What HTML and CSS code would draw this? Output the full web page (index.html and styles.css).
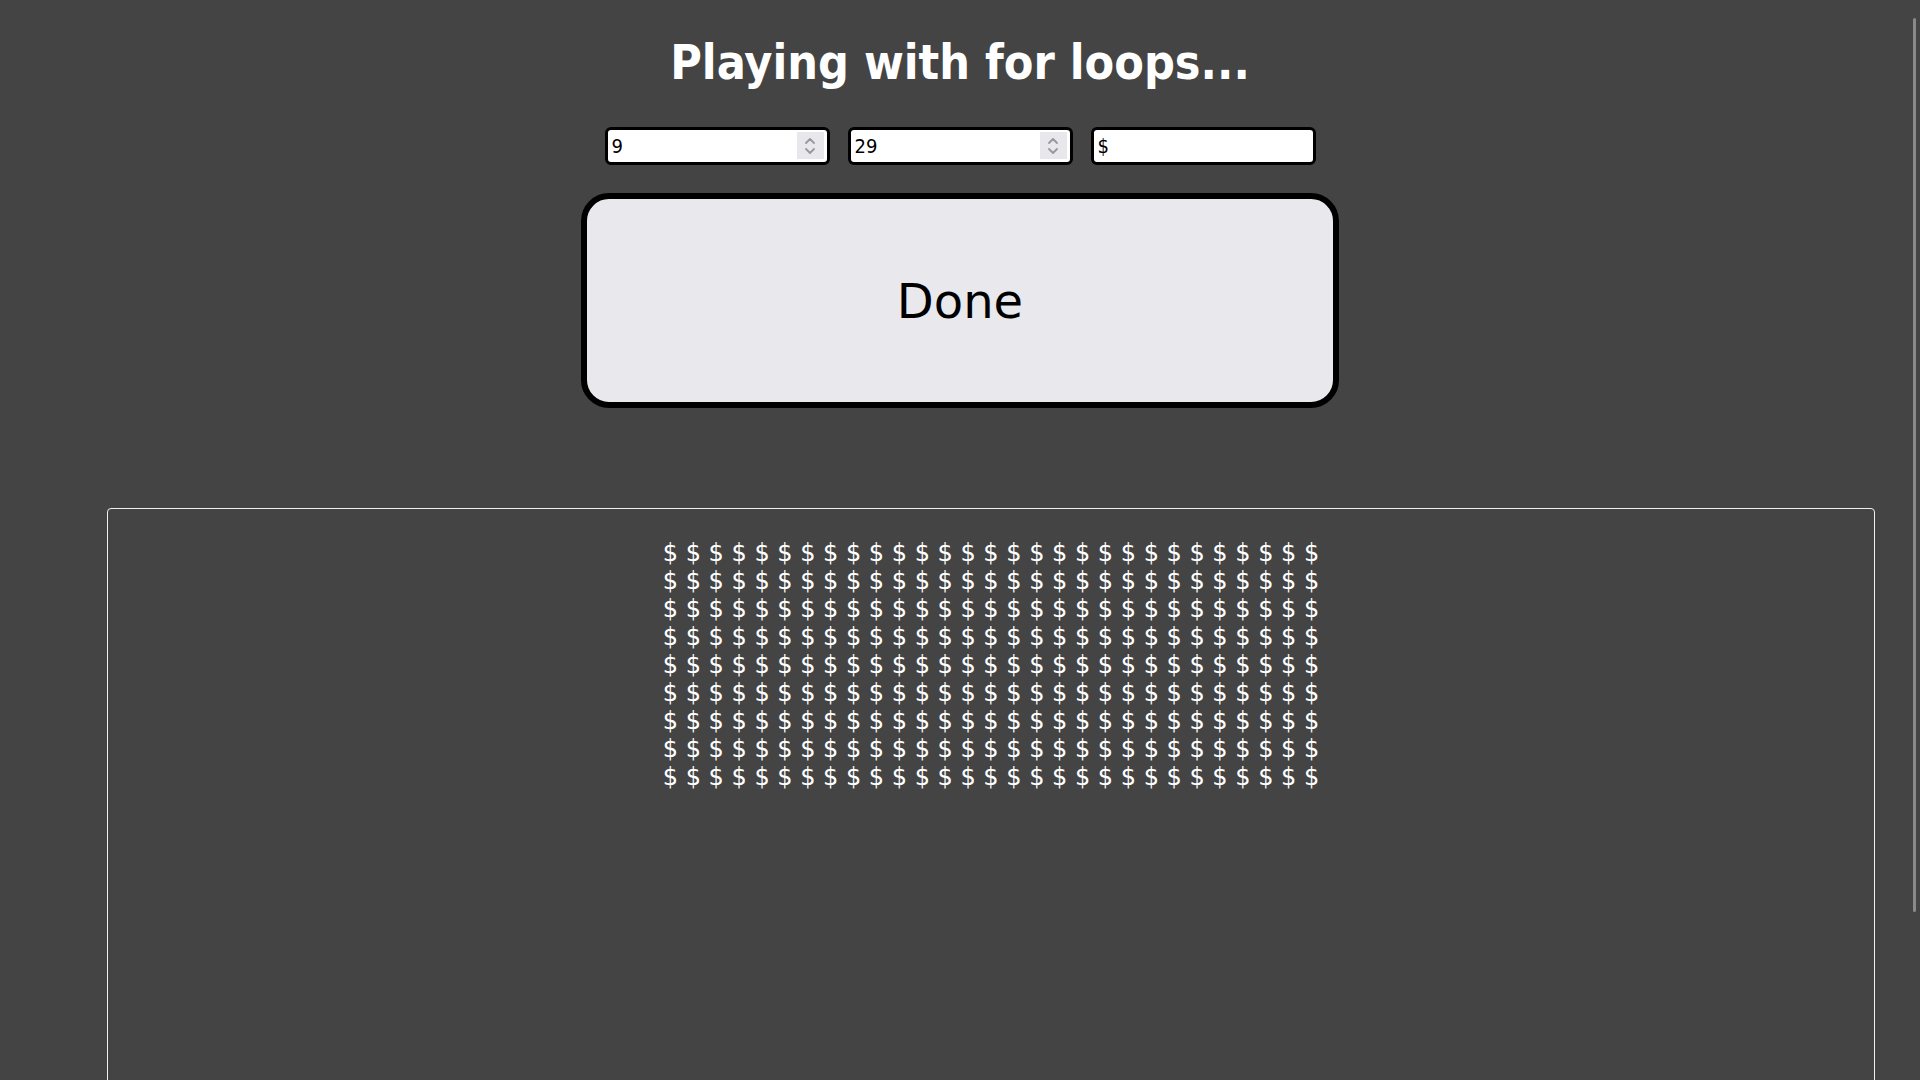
FILE: index.html
```html
<!DOCTYPE html>
<html lang="en">
<head>
<meta charset="utf-8">
<title>Playing with for loops</title>
<link rel="stylesheet" href="styles.css">
</head>
<body>
<header class="top">
  <h1 class="title">Playing with for loops...</h1>
  <div class="controls">
    <div class="field-wrap">
      <input class="field" type="number" value="9">
      <span class="spin" aria-hidden="true">
        <svg width="12" height="20" viewBox="0 0 12 20"><path d="M2 7 L6 3 L10 7" /><path d="M2 13 L6 17 L10 13" /></svg>
      </span>
    </div>
    <div class="field-wrap">
      <input class="field" type="number" value="29">
      <span class="spin" aria-hidden="true">
        <svg width="12" height="20" viewBox="0 0 12 20"><path d="M2 7 L6 3 L10 7" /><path d="M2 13 L6 17 L10 13" /></svg>
      </span>
    </div>
    <div class="field-wrap">
      <input class="field" type="text" value="$">
    </div>
  </div>
  <button class="done" type="button">Done</button>
</header>
<section class="output">
  <div class="grid" id="grid"></div>
</section>
<div class="scroll-thumb" aria-hidden="true"></div>
<script>
  var rows = 9, cols = 29, ch = "$";
  var out = "";
  for (var i = 0; i < rows; i++) {
    var line = [];
    for (var j = 0; j < cols; j++) { line.push(ch); }
    out += line.join(" ") + "<br>";
  }
  document.getElementById("grid").innerHTML = out;
</script>
</body>
</html>
```
FILE: styles.css
```css
html, body {
  margin: 0;
  padding: 0;
}
body {
  background: #444444;
  font-family: "DejaVu Sans", sans-serif;
  color: #ffffff;
}
.top {
  display: flex;
  flex-direction: column;
  align-items: center;
  padding-top: 34px;
}
.title {
  margin: 0;
  font-size: 48px;
  font-weight: bold;
  font-stretch: condensed;
  line-height: 56px;
  color: #ffffff;
}
.controls {
  display: flex;
  gap: 18px;
  margin-top: 37px;
}
.field-wrap {
  position: relative;
  width: 225px;
  height: 38px;
}
.field {
  box-sizing: border-box;
  width: 225px;
  height: 38px;
  border: 3px solid #000;
  border-radius: 6px;
  background: #fff;
  color: #000;
  font-family: "DejaVu Sans", sans-serif;
  font-stretch: condensed;
  font-size: 20px;
  padding: 1px 4px;
  margin: 0;
  outline: none;
  -moz-appearance: textfield;
}
.field::-webkit-inner-spin-button,
.field::-webkit-outer-spin-button {
  -webkit-appearance: none;
  margin: 0;
}
.spin {
  position: absolute;
  top: 5px;
  right: 6px;
  width: 27px;
  height: 27px;
  background: #e8e8ec;
  display: flex;
  align-items: center;
  justify-content: center;
  pointer-events: none;
}
.spin svg path {
  fill: none;
  stroke: #97979d;
  stroke-width: 1.8;
  stroke-linecap: round;
  stroke-linejoin: round;
}
.done {
  box-sizing: border-box;
  margin-top: 28px;
  width: 758px;
  height: 215px;
  border: 6px solid #000;
  border-radius: 28px;
  background: #e9e8ed;
  color: #000;
  font-family: "DejaVu Sans", sans-serif;
  font-size: 48px;
  padding: 0;
  cursor: pointer;
}
.output {
  margin: 100px 45px 0 107px;
  border: 1px solid #f0f0f0;
  border-radius: 4px;
  min-height: 780px;
  padding-top: 30px;
}
.grid {
  text-align: center;
  font-family: "DejaVu Sans", sans-serif;
  font-size: 24px;
  line-height: 28px;
  color: #ffffff;
}
.scroll-thumb {
  position: fixed;
  top: 18px;
  right: 4px;
  width: 3px;
  height: 894px;
  background: #8a8a8a;
  border-radius: 2px;
}
```
